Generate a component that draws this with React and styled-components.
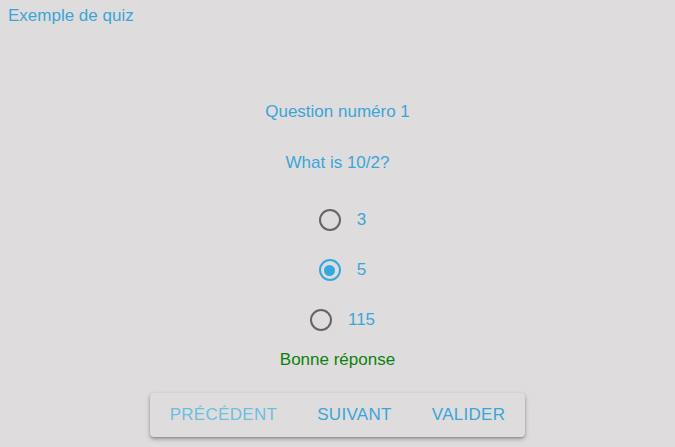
import React, { useState } from 'react';
import styled, { createGlobalStyle } from 'styled-components';

const OPTIONS = ['3', '5', '115'];

export default function App() {
    const [selected, setSelected] = useState('5');

    return <>
        <GlobalStyle />
        <Page>
            <Header>Exemple de quiz</Header>
            <Quiz>
                <Title>Question numéro 1</Title>
                <Prompt>What is 10/2?</Prompt>
                <Options>
                    {OPTIONS.map(value =>
                        <Option key={value} onClick={() => setSelected(value)}>
                            <Radio checked={selected === value} />
                            <Label>{value}</Label>
                        </Option>
                    )}
                </Options>
                <Feedback>Bonne réponse</Feedback>
                <ButtonGroup>
                    <Button disabled>Précédent</Button>
                    <Button>Suivant</Button>
                    <Button>Valider</Button>
                </ButtonGroup>
            </Quiz>
        </Page>
    </>
}

const GlobalStyle = createGlobalStyle`
    html, body {
        margin: 0;
        background-color: #dfdcdd;
    }

    body {
        font-family: "Liberation Sans", Arial, sans-serif;
    }
`;

const Page = styled.div`
    display: flex;
    flex-direction: column;
    min-height: 447px;
    color: #3aa6d8;
    font-size: 17px;
`;

const Header = styled.div`
    padding: 6px 8px 0;
    line-height: 20px;
`;

const Quiz = styled.main`
    display: flex;
    flex-direction: column;
    align-items: center;
    padding-top: 76px;
`;

const Title = styled.div`
    line-height: 20px;
`;

const Prompt = styled.div`
    line-height: 20px;
    margin-top: 31px;
`;

const Options = styled.div`
    display: flex;
    flex-direction: column;
    margin-top: 22px;
`;

const Option = styled.label`
    display: flex;
    align-items: center;
    justify-content: center;
    gap: 16px;
    height: 50px;
    padding-left: 10px;
    cursor: pointer;
`;

const Radio = styled.span`
    position: relative;
    box-sizing: border-box;
    width: 22px;
    height: 22px;
    border-radius: 50%;
    border: 2px solid ${props => props.checked ? '#35a9dd' : '#666465'};

    &::after {
        content: '';
        display: ${props => props.checked ? 'block' : 'none'};
        position: absolute;
        inset: 3.5px;
        border-radius: 50%;
        background-color: #35a9dd;
    }
`;

const Label = styled.span`
    line-height: 20px;
`;

const Feedback = styled.div`
    color: #0b820b;
    line-height: 20px;
    margin-top: 5px;
`;

const ButtonGroup = styled.div`
    display: flex;
    margin-top: 23px;
    border-radius: 4px;
    background-color: #dfdcdd;
    box-shadow: 0 2px 4px rgba(0, 0, 0, 0.3), 0 1px 2px rgba(0, 0, 0, 0.15);
`;

const Button = styled.button`
    height: 44px;
    padding: 0 20px;
    border: none;
    background: none;
    font-family: inherit;
    font-size: 17px;
    letter-spacing: 0.3px;
    text-transform: uppercase;
    color: #3aa6d8;
    cursor: pointer;

    &:disabled {
        color: #6cbfe1;
        cursor: default;
    }
`;
